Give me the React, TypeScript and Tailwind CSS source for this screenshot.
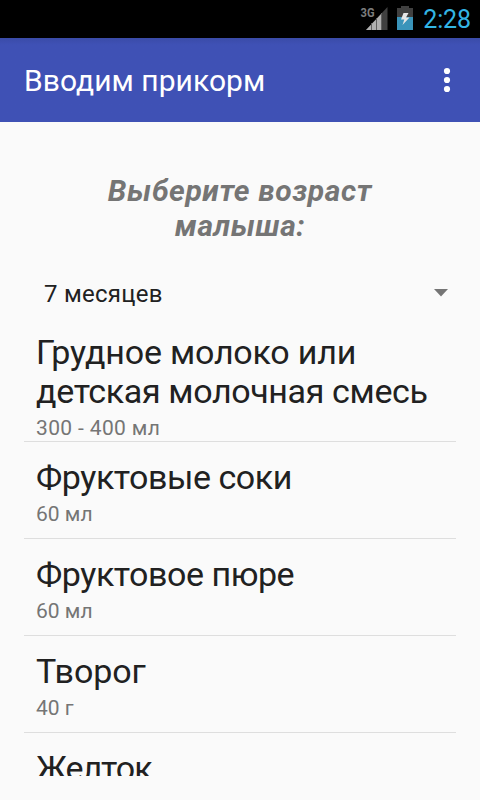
interface Food {
  title: string;
  amount: string;
  tracking: string;
}

const foods: Food[] = [
  { title: "Фруктовые соки", amount: "60 мл", tracking: "tracking-[-0.45px]" },
  { title: "Фруктовое пюре", amount: "60 мл", tracking: "tracking-[-0.45px]" },
  { title: "Творог", amount: "40 г", tracking: "tracking-[-0.1px]" },
];

function StatusBar() {
  return (
    <div className="flex h-[38px] shrink-0 items-center justify-end bg-black pr-[9px]">
      <svg width="28" height="26" viewBox="0 0 28 26" className="mr-[9px]">
        <text x="0.5" y="11" fontSize="12.5" fontWeight="700" fill="#7d7d7d" textLength="14" lengthAdjust="spacingAndGlyphs">
          3G
        </text>
        <path d="M6 24L27.5 1V24z" fill="#404040" />
        <path d="M6 24L22 7V24z" fill="#b0b0b0" />
        <path d="M11.5 17v7M16.5 12v12M21.5 7v17" stroke="#606060" />
      </svg>
      <svg width="16" height="24" viewBox="0 0 16 24" className="mr-[10px] mb-0.5">
        <path d="M4 0h8v2h4v22H0V2h4z" fill="#404040" />
        <path d="M0 11h16v13H0z" fill="#3a94ba" />
        <path d="M6.5 7h5L9 11.5h3.5L5.5 19l1.8-5.5H4z" fill="#e6e6e6" />
      </svg>
      <span className="text-[25px] leading-none tracking-[-0.1px] text-[#33b5e5]">2:28</span>
    </div>
  );
}

export default function App() {
  return (
    <div className="flex h-[800px] w-[480px] flex-col overflow-hidden bg-[#fafafa] font-['Roboto',sans-serif]">
      <StatusBar />
      <header className="flex h-[84px] shrink-0 items-center justify-between bg-[#3f51b5] bg-linear-to-b from-[#3a4ba8] to-[#3f51b5] to-8% pr-[29px] pl-6">
        <h1 className="text-[30px] tracking-[0.05px] text-white">Вводим прикорм</h1>
        <svg width="8" height="26" viewBox="0 0 8 26" fill="#fff">
          <circle cx="4" cy="4" r="3.1" />
          <circle cx="4" cy="13" r="3.1" />
          <circle cx="4" cy="22" r="3.1" />
        </svg>
      </header>
      <main className="flex min-h-0 flex-1 flex-col px-6 pb-6">
        <h2 className="mt-[51px] text-center text-[30px] leading-[35px] font-bold tracking-[0.6px] text-[#757575] italic">
          Выберите возраст
          <br />
          малыша:
        </h2>
        <div className="mt-[33px] flex h-[36px] items-center justify-between pr-2 pl-5">
          <span className="text-[24px] tracking-[0.25px] text-[#212121]">7 месяцев</span>
          <svg width="14" height="8" viewBox="0 0 14 8" fill="#757575" className="mb-0.5">
            <path d="M0 0h14L7 7.5z" />
          </svg>
        </div>
        <div className="mt-[21px] min-h-0 flex-1 overflow-hidden">
          <div className="h-[109px] border-b border-[#dedede] pl-3">
            <div className="text-[34px] leading-[39px] text-[#212121]">
              <span className="tracking-[-0.2px]">Грудное молоко или</span>
              <br />
              <span className="tracking-[-0.36px]">детская молочная смесь</span>
            </div>
            <div className="pt-[3px] text-[21px] leading-[28px] tracking-[0.35px] text-[#757575]">
              300 - 400 мл
            </div>
          </div>
          {foods.map((food) => (
            <div key={food.title} className="h-[97px] border-b border-[#dedede] pt-4 pl-3">
              <div className={`text-[34px] leading-[39px] text-[#212121] ${food.tracking}`}>
                {food.title}
              </div>
              <div className="pt-px text-[21px] leading-[32px] text-[#757575]">{food.amount}</div>
            </div>
          ))}
          <div className="pt-4 pl-3 text-[34px] leading-[39px] tracking-[-1px] text-[#212121]">
            Желток
          </div>
        </div>
      </main>
    </div>
  );
}
